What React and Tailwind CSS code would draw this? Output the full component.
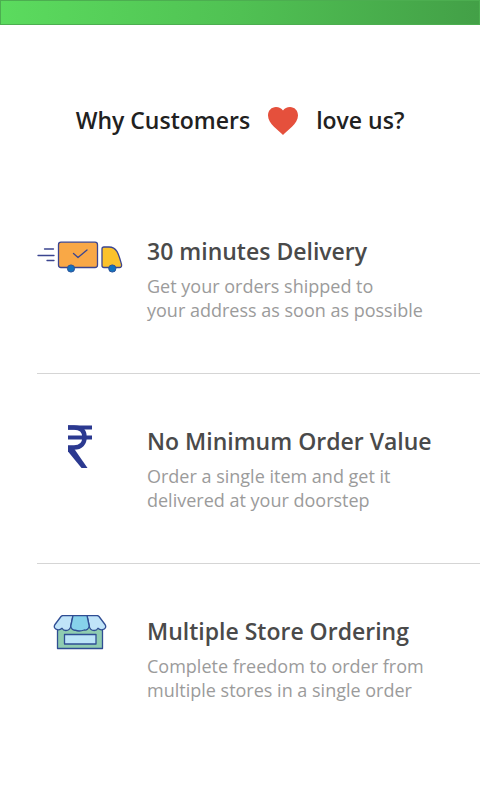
import React from 'react';

const TruckIcon = () => (
  <svg width="86" height="40" viewBox="0 0 86 40" fill="none" aria-hidden="true">
    <g stroke="#3b4590" strokeWidth="1.3" strokeLinecap="round" strokeLinejoin="round">
      <path d="M7.500 14h9M1 20.500h16M10 25.500h7" />
      <rect x="21.500" y="7.200" width="39" height="25.300" rx="2.500" fill="#f9a846" />
      <path d="M36.500 18.500l4.500 4 9-7.500" />
      <path d="M67 12h5c8 0 9.800 7.500 12.400 17 .6 2.300-.3 3.500-2 3.500H67a2 2 0 0 1-2-2V14a2 2 0 0 1 2-2z" fill="#fbc22c" />
    </g>
    <g fill="#1272bd" stroke="#2c5299">
      <circle cx="34" cy="33.500" r="3.600" />
      <circle cx="75.300" cy="33.500" r="3.600" />
    </g>
  </svg>
);

const RupeeIcon = () => (
  <svg width="26" height="44" viewBox="0 0 26 44" fill="none" stroke="#2b3990" aria-hidden="true">
    <path d="M1 2.500h24M1 12.500h24" strokeWidth="4" />
    <path d="M1 2.500h6c7 0 10.500 3.500 10.500 9.700S14 22.500 7 22.500H1" strokeWidth="4.500" />
    <path d="M1 22.500L7 23.500 20.500 43H14.500L1 26.500z" fill="#2b3990" stroke="none" />
  </svg>
);

const StoreIcon = () => (
  <svg width="54" height="36" viewBox="0 1 54 36" stroke="#2f4d93" strokeWidth="1.3" strokeLinejoin="round" aria-hidden="true">
    <path d="M4.500 10h45v24.500h-45z" fill="#8fccb1" />
    <rect x="11.500" y="20.500" width="31.500" height="9.500" fill="#bbe4f8" />
    <path d="M10 1.500h10L17.800 12c-.5 3-2.500 4.500-5 4.500-1.800 0-3-.8-3.800-2.200C7.800 15.500 6 16 4.500 15.700 1.500 15.200.5 12.500 2 10.500L8 2.500q.8-1 2-1z" fill="#c0e4f8" />
    <path d="M44 1.500H34L36.200 12c.5 3 2.500 4.500 5 4.500 1.800 0 3-.8 3.800-2.200 1.200 1.200 3 1.700 4.500 1.400 3-.5 4-3.200 2.500-5.200L46 2.500q-.8-1-2-1z" fill="#c0e4f8" />
    <path d="M20 1.500H34L36.200 12c-.5 3-2.500 4.500-5 4-4 1.500-6 1.500-9 .2C20 16.500 18 15 17.800 12z" fill="#87d2ea" />
  </svg>
);

const HeartIcon = () => (
  <svg width="30" height="28" viewBox="0 0 30 28" fill="#e5503c" role="img" aria-label="heart">
    <path d="M15 28C11 23.500 0 17 0 8.500 0 3.500 3.500 0 8 0c3 0 5.500 1.300 7 3.500C16.500 1.300 19 0 22 0c4.500 0 8 3.500 8 8.500C30 17 19 23.500 15 28z" />
  </svg>
);

const features = [
  {
    title: '30 minutes Delivery',
    lines: ['Get your orders shipped to', 'your address as soon as possible'],
    icon: <TruckIcon />,
  },
  {
    title: 'No Minimum Order Value',
    lines: ['Order a single item and get it', 'delivered at your doorstep'],
    icon: <RupeeIcon />,
  },
  {
    title: 'Multiple Store Ordering',
    lines: ['Complete freedom to order from', 'multiple stores in a single order'],
    icon: <StoreIcon />,
  },
];

const App = () => {
  return (
    <div className="min-h-screen bg-white font-['Open_Sans',sans-serif]">
      <header className="h-[25px] border border-[#4cae50] bg-linear-to-r from-[#5bdb5e] via-[#50c153] to-[#43a047]" />

      <main>
        <h1 className="flex items-center justify-center gap-[18px] pt-20 text-[23px] leading-[31px] font-semibold text-[#212121]">
          <span>Why Customers</span>
          <HeartIcon />
          <span>love us?</span>
        </h1>

        <ul className="mt-12 pl-[37px]">
          {features.map((feature) => (
            <li key={feature.title} className="flex border-b border-[#d5d5d5] py-[51px] last:border-b-0">
              <div className="flex w-[110px] shrink-0">
                <div className="flex w-[86px] justify-center">{feature.icon}</div>
              </div>
              <div>
                <h2 className="text-[23px] leading-[33px] font-semibold text-[#4a4a4a]">{feature.title}</h2>
                <p className="mt-1.5 text-[18px] leading-6 font-normal text-[#9b9b9b]">
                  {feature.lines[0]}
                  <br />
                  {feature.lines[1]}
                </p>
              </div>
            </li>
          ))}
        </ul>
      </main>
    </div>
  );
};

export default App;
